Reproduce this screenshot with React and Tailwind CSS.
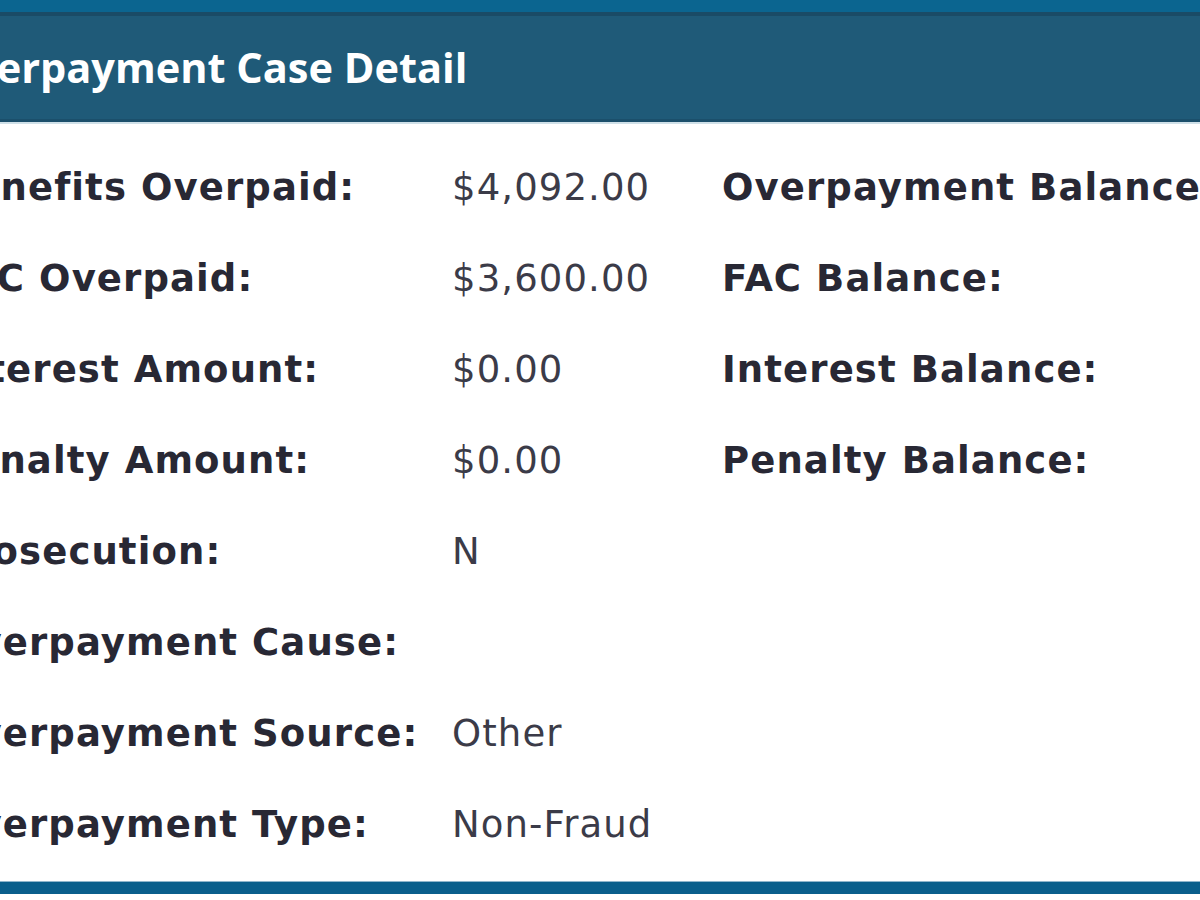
export default function App() {
  const rows = [
    { label: "Benefits Overpaid:", value: "$4,092.00", right: "Overpayment Balance:" },
    { label: "FAC Overpaid:", value: "$3,600.00", right: "FAC Balance:" },
    { label: "Interest Amount:", value: "$0.00", right: "Interest Balance:" },
    { label: "Penalty Amount:", value: "$0.00", right: "Penalty Balance:" },
    { label: "Prosecution:", value: "N", right: "" },
    { label: "Overpayment Cause:", value: "", right: "" },
    { label: "Overpayment Source:", value: "Other", right: "" },
    { label: "Overpayment Type:", value: "Non-Fraud", right: "" },
  ];

  return (
    <div className="w-[1200px] h-[900px] overflow-hidden bg-white font-['DejaVu_Sans',sans-serif]">
      {/* top strip */}
      <div className="h-[12px] bg-[#0b6590]" />

      {/* header band */}
      <div className="h-[110px] bg-[#1f5a78] border-t-[4px] border-[#1a4b66] border-b-[3px] border-b-[#1b4f6b] flex items-center">
        <h1 className="ml-[-60px] whitespace-nowrap text-white font-['Open_Sans',sans-serif] font-bold text-[41.5px] leading-none">
          Overpayment Case Detail
        </h1>
      </div>
      <div className="h-[2px] bg-[#cfe0e8]" />

      {/* detail rows */}
      <div className="pt-[18px] h-[757px]">
        {rows.map((row) => (
          <div key={row.label} className="h-[91px] flex items-center whitespace-nowrap text-[37px] tracking-[1.1px]">
            <div className="w-[507px] ml-[-55px] shrink-0 font-bold text-[#282834]">
              {row.label}
            </div>
            <div className="w-[270px] shrink-0 text-[#3b3b48]">{row.value}</div>
            <div className="shrink-0 font-bold text-[#282834]">{row.right}</div>
          </div>
        ))}
      </div>

      {/* bottom bar */}
      <div className="h-[13px] bg-[#0a5f8c] border-t border-[#8fb6cc]" />
    </div>
  );
}
